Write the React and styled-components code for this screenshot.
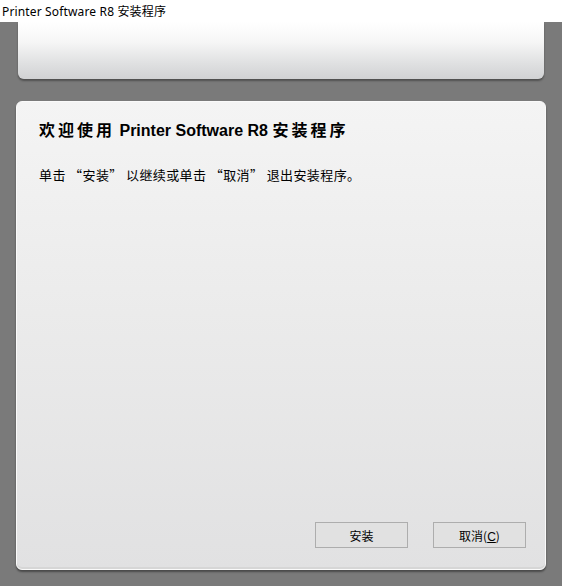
import React from 'react';
import styled, { createGlobalStyle } from 'styled-components';

const GlobalStyles = createGlobalStyle`
  html, body {
    margin: 0;
    padding: 0;
    background: #7a7a7a;
  }
  body {
    font-family: "Liberation Sans", "Noto Sans CJK SC", sans-serif;
  }
`;

const Page = styled.div`
  width: 562px;
  height: 586px;
  display: flex;
  flex-direction: column;
  overflow: hidden;
`;

const TitleBar = styled.div`
  height: 22px;
  background: #fff;
  display: flex;
  align-items: center;
  padding-left: 2px;
  font-family: "Noto Sans", "Noto Sans CJK SC", sans-serif;
  font-size: 12px;
  letter-spacing: 0.15px;
  color: #000;
`;

const Stage = styled.div`
  flex: 1;
  background: #7a7a7a;
  display: flex;
  flex-direction: column;
`;

const Banner = styled.div`
  margin: 0 18px 0 18px;
  height: 57px;
  border-radius: 0 0 6px 6px;
  background: linear-gradient(to bottom, #ffffff 0%, #f6f6f6 35%, #dedfe0 75%, #d1d2d4 100%);
  box-shadow: 0 2px 2px rgba(0, 0, 0, 0.35);
`;

const Panel = styled.div`
  margin: 22px 16px 0 16px;
  height: 469px;
  box-sizing: border-box;
  border-radius: 6px;
  border: 1px solid #fafafa;
  background: linear-gradient(to bottom, #f4f4f4 0%, #ebebeb 45%, #e1e1e2 100%);
  box-shadow: 0 2px 2px rgba(0, 0, 0, 0.4), inset 0 -2px 0 #d6d6d6;
  display: flex;
  flex-direction: column;
  padding: 17px 19px 21px 22px;
`;

const Heading = styled.h1`
  margin: 0;
  font-size: 16px;
  line-height: 20px;
  font-weight: bold;
  color: #000;
  font-family: "Liberation Sans", "Noto Sans CJK SC", sans-serif;
`;

const Wide = styled.span`
  letter-spacing: 3px;
  font-family: "Noto Sans CJK SC", sans-serif;
`;

const Message = styled.p`
  margin: 25px 0 0 0;
  font-size: 13px;
  line-height: 18px;
  letter-spacing: 0.4px;
  color: #000;
  font-family: "Noto Sans CJK SC", sans-serif;
  flex: 1;
`;

const Buttons = styled.div`
  display: flex;
  justify-content: flex-end;
  gap: 25px;
`;

const Button = styled.button`
  width: 93px;
  height: 26px;
  box-sizing: border-box;
  border: 1px solid #adadad;
  background: #e1e1e1;
  font-family: "Noto Sans CJK SC", sans-serif;
  font-size: 12px;
  color: #000;
  padding: 0;
`;

const Key = styled.span`
  text-decoration: underline;
  font-family: "Liberation Sans", sans-serif;
`;

export default function App() {
  return (
    <Page>
      <GlobalStyles />
      <TitleBar>Printer Software R8 安装程序</TitleBar>
      <Stage>
        <Banner />
        <Panel>
          <Heading>
            <Wide>欢迎使用</Wide> Printer Software R8 <Wide>安装程序</Wide>
          </Heading>
          <Message>单击 “安装” 以继续或单击 “取消” 退出安装程序。</Message>
          <Buttons>
            <Button>安装</Button>
            <Button>取消(<Key>C</Key>)</Button>
          </Buttons>
        </Panel>
      </Stage>
    </Page>
  );
}
